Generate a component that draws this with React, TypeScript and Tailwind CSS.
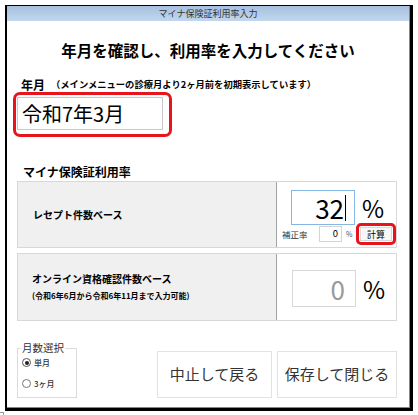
import React from "react";

const jp = "font-['Noto_Sans_CJK_JP','Noto_Sans',sans-serif]";

const App = () => {
  return (
    <div className={`h-[415px] w-[418px] bg-white ${jp} text-black`}>
      {/* WINDOW */}
      <div className="ml-[5px] pt-[5px]">
        <div className="h-[406px] w-[408px] border-b-[3px] border-l-2 border-r-[3px] border-t border-black">
          <div className="flex h-full flex-col border-b border-r border-[#5b8fc2]">

            {/* TITLE BAR */}
            <div className="flex h-[15px] items-center justify-center bg-gradient-to-b from-[#a6c0df] to-[#c2d7ee] text-[9px] leading-none text-[#333]">
              マイナ保険証利用率入力
            </div>

            {/* HEADING */}
            <h1 className="mt-[19px] text-center text-[15.5px] font-bold leading-[20px]">
              年月を確認し、利用率を入力してください
            </h1>

            {/* YEAR MONTH */}
            <div className="ml-[14px] mt-[18px] flex h-[14px] items-center gap-[6px] font-bold leading-none">
              <span className="text-[12px]">年月</span>
              <span className="text-[9.3px]">（メインメニューの診療月より2ヶ月前を初期表示しています）</span>
            </div>

            <div className="ml-[6px] h-[45px] w-[159px] rounded-[7px] border-[3px] border-[#e8141b] pl-[1px] pt-[2px]">
              <div className="flex h-[33px] w-[146px] items-center border border-[#c9c9c9] pl-[4px] text-[20px] leading-none">
                令和7年3月
              </div>
            </div>

            {/* RATE */}
            <div className="ml-[16px] mt-[28px] flex h-[14px] items-center text-[12px] font-bold leading-none">
              マイナ保険証利用率
            </div>

            <div className="ml-[10px] mt-[2px] flex w-[380px] flex-col gap-[5px]">

              {/* ROW 1 */}
              <div className="flex h-[67px] border border-[#d8d8d8]">
                <div className="flex w-[259px] items-center border-r border-[#a3a3a3] bg-[#f0f0f0] pl-[15px] text-[10px] font-bold leading-none">
                  レセプト件数ベース
                </div>
                <div className="flex flex-1 flex-col pt-[8px]">
                  <div className="ml-[14px] flex items-center">
                    <div className="flex h-[35px] w-[64px] items-center justify-end border border-[#86b6e6] pr-[8px] text-[26px] leading-none">
                      32
                      <span className="ml-[1px] h-[26px] w-px bg-black" />
                    </div>
                    <span className="ml-[7px] text-[24px] leading-none">%</span>
                  </div>
                  <div className="-mt-[2px] flex h-[22px] items-center">
                    <span className="ml-[5px] w-[37px] text-[8.5px] leading-none text-[#333]">補正率</span>
                    <div className="flex h-[16px] w-[23px] items-center justify-end border border-[#d4d4d4] pr-[3px] text-[9.5px] leading-none">
                      0
                    </div>
                    <span className="ml-[4px] w-[10px] text-[7px] leading-none text-[#555]">%</span>
                    <div className="h-[22px] w-[40px] rounded-[5px] border-[3px] border-[#e8141b] p-px">
                      <div className="flex h-full items-center justify-center border border-[#d8d8d8] bg-[#f7f7f7] text-[9px] leading-none">
                        計算
                      </div>
                    </div>
                  </div>
                </div>
              </div>

              {/* ROW 2 */}
              <div className="flex h-[68px] border border-[#d8d8d8]">
                <div className="flex w-[259px] flex-col justify-center gap-[8px] border-r border-[#a3a3a3] bg-[#f0f0f0] pl-[14px] font-bold leading-none">
                  <span className="text-[10px]">オンライン資格確認件数ベース</span>
                  <span className="text-[8px]">(令和6年6月から令和6年11月まで入力可能)</span>
                </div>
                <div className="ml-[15px] mt-[16px] flex items-start">
                  <div className="flex h-[37px] w-[64px] items-center justify-end border border-[#d8d8d8] pr-[10px] text-[26px] leading-none text-[#9a9a9a]">
                    0
                  </div>
                  <span className="ml-[7px] mt-[7px] text-[24px] leading-none">%</span>
                </div>
              </div>
            </div>

            {/* BOTTOM */}
            <div className="ml-[10px] mt-[27px] flex items-start">
              <div className="relative h-[50px] w-[60px] border border-[#dcdcdc]">
                <span className="absolute -top-[8px] left-[3px] bg-white px-[1px] text-[10.5px] leading-[14px] text-[#333]">
                  月数選択
                </span>
                <div className="mt-[9px] flex flex-col gap-[12px] pl-[4px] text-[8px] font-medium leading-none text-[#333]">
                  <label className="flex items-center gap-[3px]">
                    <span className="flex h-[9px] w-[9px] items-center justify-center rounded-full border border-[#555]">
                      <span className="h-[4px] w-[4px] rounded-full bg-[#222]" />
                    </span>
                    単月
                  </label>
                  <label className="flex items-center gap-[3px]">
                    <span className="h-[9px] w-[9px] rounded-full border border-[#777]" />
                    3ヶ月
                  </label>
                </div>
              </div>

              <div className="ml-[80px] mt-[3px] flex gap-[5px]">
                <button className="flex h-[47px] w-[115px] items-center justify-center border border-[#e2e2e2] bg-white text-[15px] text-[#333]">
                  中止して戻る
                </button>
                <button className="flex h-[47px] w-[120px] items-center justify-center border border-[#e2e2e2] bg-white text-[15px] text-[#333]">
                  保存して閉じる
                </button>
              </div>
            </div>
          </div>
        </div>
      </div>
      <div className="mt-px h-[4px] w-[4px] border-r border-t border-[#9a9a9a]" />
    </div>
  );
};

export default App;
